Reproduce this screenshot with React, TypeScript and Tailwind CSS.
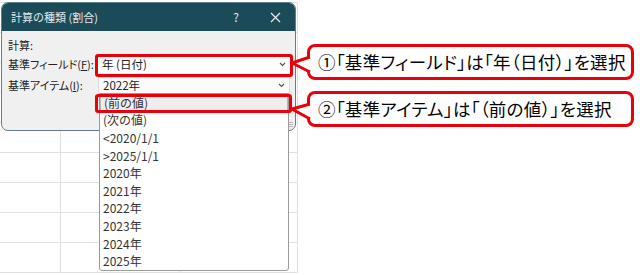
import React from "react";

const items = ["(前の値)", "(次の値)", "<2020/1/1", ">2025/1/1", "2020年", "2021年", "2022年", "2023年", "2024年", "2025年"];

function Chevron() {
  return (
    <svg width="7" height="5" viewBox="0 0 7 5" className="shrink-0">
      <path d="M1 1 L3.5 3.5 L6 1" fill="none" stroke="#555" strokeWidth="1.2" />
    </svg>
  );
}

function Sheet() {
  return (
    <div className="pt-[2px]">
      <div className="grid grid-cols-[61px_120px_117px] border-t border-[#e1e1e1]">
        {Array.from({ length: 27 }).map((_, i) => (
          <div key={i} className="h-[30px] border-b border-r border-[#e1e1e1]" />
        ))}
      </div>
    </div>
  );
}

function Dialog() {
  return (
    <div className="absolute left-[1px] top-[2px] w-[295px] h-[129px] rounded-[7px] border border-[#5b7f8b] bg-[#f0f0f0] overflow-hidden">
      <div className="h-[28px] bg-[#1b4a59] flex items-center pl-[9px] pr-[14px] text-[11px] text-[#e3eaec]">
        <span className="flex-1">計算の種類 (割合)</span>
        <span className="w-[12px] text-center mr-[28px] text-[12px]">?</span>
        <svg width="11" height="11" viewBox="0 0 11 11">
          <path d="M1 1 L10 10 M10 1 L1 10" stroke="#e3eaec" strokeWidth="1.3" />
        </svg>
      </div>
      <div className="pl-[6px] pt-[6px] text-[11px] text-[#222] [font-feature-settings:'palt']">
        <div className="h-[16px] leading-[16px]">計算:</div>
        <div className="flex items-center mt-[3px] h-[17px]">
          <span className="w-[90px] whitespace-nowrap">
            基準フィールド(<span className="underline">F</span>):
          </span>
          <div className="w-[192px] h-[17px] bg-white flex items-center pl-[4px] pr-[4px] text-[11.5px]">
            <span className="flex-1">年 (日付)</span>
            <Chevron />
          </div>
        </div>
        <div className="flex items-center mt-[4px] h-[17px]">
          <span className="w-[90px] whitespace-nowrap">
            基準アイテム(<span className="underline">I</span>):
          </span>
          <div className="w-[192px] h-[17px] bg-[#fbfbfb] border border-[#dcdcdc] flex items-center pl-[4px] pr-[4px] text-[11.5px]">
            <span className="flex-1">2022年</span>
            <Chevron />
          </div>
        </div>
      </div>
      <div className="absolute right-[2px] bottom-[3px] flex flex-col gap-[1px]">
        <div className="w-[4px] h-[1px] bg-[#b8b8b8]" />
        <div className="w-[4px] h-[1px] bg-[#b8b8b8]" />
        <div className="w-[4px] h-[1px] bg-[#b8b8b8]" />
      </div>
    </div>
  );
}

function DropList() {
  return (
    <div className="absolute left-[99px] top-[93px] w-[190px] h-[178px] bg-white border border-[#9a9a9a] rounded-b-[3px] text-[12px] text-[#333]">
      {items.map((t, i) => (
        <div
          key={t}
          className={
            "h-[17.6px] flex items-center pl-[3px] " +
            (i === 0 ? "bg-[#eeeeee] border border-[#b5b5b5]" : "")
          }
        >
          {t}
        </div>
      ))}
    </div>
  );
}

function Callout({ children }: { children: React.ReactNode }) {
  return (
    <div className="w-[327px] h-[36px] bg-white border-[3px] border-[#e8000b] rounded-[8px] flex items-center pl-[8px] text-[17.5px] tracking-[0.3px] text-black [font-feature-settings:'palt']">
      {children}
    </div>
  );
}

export default function App() {
  return (
    <div className="relative w-[640px] h-[275px] bg-white overflow-hidden flex font-['Noto_Sans_CJK_JP',sans-serif]">
      <div className="relative w-[298px] h-full shrink-0">
        <Sheet />
        <Dialog />
        <DropList />
        <div className="absolute left-[95px] top-[54px] w-[198px] h-[23px] border-[3px] border-[#e8000b] rounded-[3px]" />
        <div className="absolute left-[95px] top-[94px] w-[197px] h-[19px] border-[3px] border-[#e8000b] rounded-[3px]" />
      </div>
      <div className="flex flex-col pt-[44px] pl-[9px] gap-[11px]">
        <Callout>①「基準フィールド」は「年（日付）」を選択</Callout>
        <Callout>②「基準アイテム」は「（前の値）」を選択</Callout>
      </div>
      <svg className="absolute left-[288px] top-[50px]" width="26" height="80" viewBox="0 0 26 80">
        <polygon points="4,13 22,7 22,22" fill="white" />
        <polyline points="22,7 4,13 22,22" fill="none" stroke="#e8000b" strokeWidth="3" strokeLinejoin="round" />
        <polygon points="4,59 22,54 22,69" fill="white" />
        <polyline points="22,54 4,59 22,69" fill="none" stroke="#e8000b" strokeWidth="3" strokeLinejoin="round" />
      </svg>
    </div>
  );
}
